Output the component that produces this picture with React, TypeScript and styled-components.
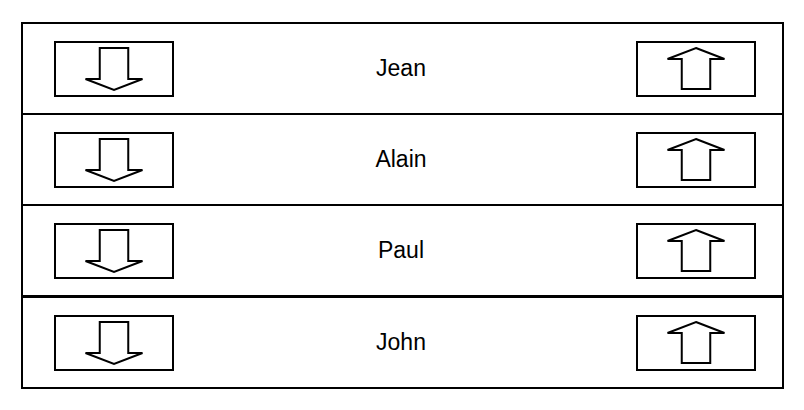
import React from 'react';
import styled, { createGlobalStyle } from 'styled-components';

const GlobalStyle = createGlobalStyle`
    html, body {
        margin: 0;
        padding: 0;
        background: #ffffff;
    }
    body {
        font-family: 'Liberation Sans', Arial, sans-serif;
    }
`;

// 바깥 여백
const Page = styled.div`
    padding: 22px 0 0 21px;
`;

// 리스트 테두리
const ListBox = styled.div`
    width: 763px;
    height: 367px;
    box-sizing: border-box;
    border: 2px solid #000;
    display: flex;
    flex-direction: column;
`;

// 한 줄
const Row = styled.div<{ $sep: number }>`
    flex: 1;
    display: flex;
    align-items: center;
    padding: 0 26px 0 31px;
    border-bottom: ${p => p.$sep}px solid #000;
`;

const Name = styled.div`
    flex: 1;
    text-align: center;
    padding-right: 8px;
    font-size: 23px;
    color: #000;
`;

const MoveButton = styled.button`
    width: 120px;
    height: 56px;
    box-sizing: border-box;
    border: 2px solid #000;
    background: #fff;
    padding: 0;
    display: flex;
    align-items: center;
    justify-content: center;
    cursor: pointer;
`;

const ArrowSvg = styled.svg`
    width: 62px;
    height: 44px;
    overflow: visible;
`;

const DOWN = '16.75,1 45.25,1 45.25,32 59.5,32 31,43 2.5,32 16.75,32';
const UP = '31,1 59.5,12 45.25,12 45.25,42 16.75,42 16.75,12 2.5,12';

const Arrow = ({ dir }: { dir: 'up' | 'down' }) => (
    <ArrowSvg viewBox="0 0 62 44">
        <polygon
            points={dir === 'up' ? UP : DOWN}
            fill="#fff"
            stroke="#000"
            strokeWidth={2}
            strokeLinejoin="miter"
        />
    </ArrowSvg>
);

const names = ['Jean', 'Alain', 'Paul', 'John'];

const App = function() {
    return (
        <Page>
            <GlobalStyle/>
            <ListBox>
                {names.map((name, i) => (
                    <Row key={name} $sep={i === names.length - 1 ? 0 : i === 2 ? 3 : 2}>
                        <MoveButton aria-label="down"><Arrow dir="down"/></MoveButton>
                        <Name>{name}</Name>
                        <MoveButton aria-label="up"><Arrow dir="up"/></MoveButton>
                    </Row>
                ))}
            </ListBox>
        </Page>
    );
};

export default App;
